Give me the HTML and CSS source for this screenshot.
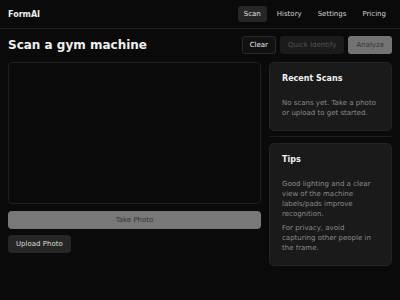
FILE: index.html
```html
<!DOCTYPE html>
<html lang="en">
<head>
<meta charset="utf-8">
<title>FormAI</title>
<link rel="stylesheet" href="styles.css">
</head>
<body>
<header class="topbar">
  <div class="brand">FormAI</div>
  <nav class="nav">
    <a class="nav-item active">Scan</a>
    <a class="nav-item">History</a>
    <a class="nav-item">Settings</a>
    <a class="nav-item">Pricing</a>
  </nav>
</header>
<section class="title-row">
  <h1 class="title">Scan a gym machine</h1>
  <div class="actions">
    <button class="btn btn-outline">Clear</button>
    <button class="btn btn-muted">Quick Identify</button>
    <button class="btn btn-primary">Analyze</button>
  </div>
</section>
<main class="main">
  <div class="left">
    <div class="camera"></div>
    <button class="btn btn-wide">Take Photo</button>
    <div><button class="btn btn-secondary">Upload Photo</button></div>
  </div>
  <aside class="right">
    <div class="card">
      <h2 class="card-title">Recent Scans</h2>
      <p class="card-text">No scans yet. Take a photo or upload to get started.</p>
    </div>
    <hr class="divider">
    <div class="card">
      <h2 class="card-title">Tips</h2>
      <p class="card-text">Good lighting and a clear view of the machine labels/pads improve recognition.</p>
      <p class="card-text gap">For privacy, avoid capturing other people in the frame.</p>
    </div>
  </aside>
</main>
</body>
</html>
```
FILE: styles.css
```css
* { box-sizing: border-box; }
html, body {
  margin: 0;
  background: #0a0a0a;
  color: #e6e6e6;
  font-family: "DejaVu Sans", sans-serif;
}
.topbar {
  height: 29px;
  border-bottom: 1px solid #1e1e1e;
  display: flex;
  align-items: center;
  justify-content: space-between;
  padding: 0 8px;
}
.brand {
  font-size: 8px;
  font-weight: bold;
  color: #eeeeee;
}
.nav {
  display: flex;
  gap: 4px;
}
.nav-item {
  font-size: 7px;
  height: 16px;
  line-height: 16px;
  padding: 0 6px;
  border-radius: 3px;
  color: #d4d4d4;
}
.nav-item.active {
  background: #262626;
  color: #e0e0e0;
}
.title-row {
  display: flex;
  align-items: center;
  justify-content: space-between;
  padding: 7px 8px 0 8px;
  height: 25px;
}
.title {
  margin: 0;
  font-size: 12px;
  font-weight: bold;
  color: #f0f0f0;
}
.actions {
  display: flex;
  gap: 4px;
}
.btn {
  font-family: "DejaVu Sans", sans-serif;
  font-size: 7px;
  height: 18px;
  padding: 0 8px;
  border: 0;
  border-radius: 3px;
  cursor: pointer;
}
.btn-outline {
  background: #111111;
  border: 1px solid #2a2a2a;
  color: #ececec;
  padding: 0 7px;
}
.btn-muted {
  background: #1b1b1b;
  color: #555555;
}
.btn-primary {
  background: #737373;
  color: #333333;
}
.main {
  display: grid;
  grid-template-columns: 1fr 123px;
  gap: 8px;
  padding: 0 8px;
  margin-top: 8px;
}
.left {
  display: flex;
  flex-direction: column;
}
.camera {
  height: 142px;
  border: 1px solid #1f1f1f;
  border-radius: 4px;
  background: #0a0a0a;
}
.btn-wide {
  margin-top: 7px;
  width: 100%;
  background: #787878;
  color: #363636;
  border-radius: 4px;
}
.btn-secondary {
  margin-top: 6px;
  background: #262626;
  color: #dcdcdc;
  border-radius: 4px;
}
.right {
  display: flex;
  flex-direction: column;
}
.card {
  background: #1a1a1a;
  border: 1px solid #242424;
  border-radius: 5px;
  padding: 11px 12px 12px 12px;
}
.card-title {
  margin: 0 0 14px 0;
  font-size: 8px;
  line-height: 10px;
  font-weight: bold;
  color: #f0f0f0;
}
.card-text {
  margin: 0;
  font-size: 7px;
  line-height: 10px;
  color: #8a8a8a;
}
.card-text.gap {
  margin-top: 4px;
}
.divider {
  border: 0;
  height: 1px;
  background: #1e1e1e;
  margin: 5px 0 6px 0;
}
```
